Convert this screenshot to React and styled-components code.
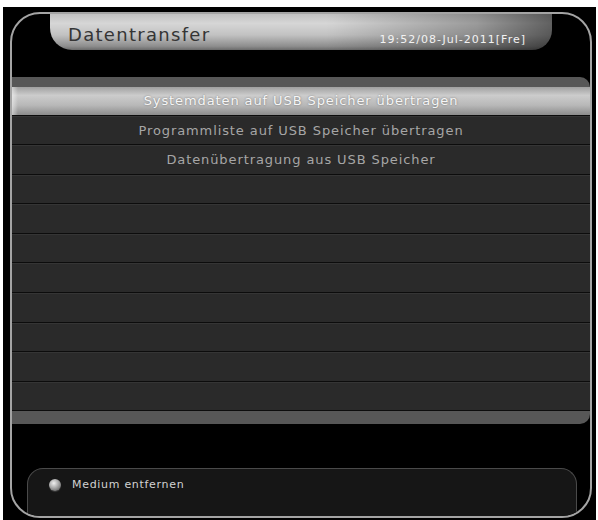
import React from "react";
import styled, { createGlobalStyle } from "styled-components";

const Global = createGlobalStyle`
  html, body { margin: 0; padding: 0; background: #ffffff; }
  body { font-family: "DejaVu Sans", "Liberation Sans", sans-serif; }
`;

const Page = styled.div`
  width: 598px;
  height: 520px;
  padding: 7px 0 0 3px;
  box-sizing: border-box;
  overflow: hidden;
`;

const Frame = styled.div`
  width: 593px;
  height: 513px;
  background: #000;
  padding: 5px 0 0 7px;
  box-sizing: border-box;
`;

const Screen = styled.div`
  width: 582px;
  height: 506px;
  box-sizing: border-box;
  border: 2px solid #a4a4a4;
  border-radius: 30px;
  display: flex;
  flex-direction: column;
  overflow: hidden;
`;

const HeaderTab = styled.div`
  margin: -2px 0 0 38px;
  width: 502px;
  height: 38px;
  box-sizing: border-box;
  border-radius: 0 0 20px 22px;
  background:
    linear-gradient(to right, rgba(0,0,0,0) 0%, rgba(0,0,0,0) 55%, rgba(0,0,0,0.28) 85%, rgba(0,0,0,0.55) 100%),
    linear-gradient(to bottom, #bdbdbd 0%, #d6d6d6 30%, #c2c2c2 60%, #8e8e8e 90%, #6a6a6a 100%);
  display: flex;
  align-items: center;
  justify-content: space-between;
  padding: 0 26px 0 18px;
`;

const Title = styled.div`
  font-size: 18px;
  color: #353535;
  letter-spacing: 1.3px;
  margin-top: 6px;
`;

const DateText = styled.div`
  font-size: 11px;
  color: #f2f2f2;
  letter-spacing: 1px;
  margin-top: 16px;
`;

const List = styled.div`
  margin-top: 27px;
  display: flex;
  flex-direction: column;
`;

const Band = styled.div`
  height: ${(p) => p.$h}px;
  background: #575757;
  border-radius: ${(p) => (p.$top ? "0 10px 0 0" : "0 0 10px 0")};
`;

const Row = styled.div`
  height: 28.5px;
  box-sizing: border-box;
  border-bottom: 1px solid #0c0c0c;
  border-top: ${(p) => (p.$sel ? "0" : "1px solid #353535")};
  display: flex;
  align-items: center;
  justify-content: center;
  font-size: 13px;
  letter-spacing: 0.9px;
  color: ${(p) => (p.$sel ? "#f6f6f6" : "#a6a6a6")};
  background: ${(p) =>
    p.$sel
      ? "linear-gradient(to right, rgba(255,255,255,0.5) 0px, rgba(255,255,255,0) 6px), linear-gradient(to bottom, #a0a0a0 0%, #cccccc 30%, #b8b8b8 65%, #8c8c8c 100%)"
      : "#2a2a2a"};
  text-shadow: ${(p) => (p.$sel ? "0 0 2px rgba(0,0,0,0.45)" : "none")};
  & + & { height: 29.6px; }
`;

const Footer = styled.div`
  margin: auto 0 0 15px;
  width: 550px;
  height: 48px;
  box-sizing: border-box;
  background: #161616;
  border: 1.5px solid #4a4a4a;
  border-bottom: 0;
  border-radius: 16px 16px 0 0;
  display: flex;
  align-items: flex-start;
  padding: 9px 0 0 21px;
  gap: 11px;
`;

const Ball = styled.div`
  width: 12px;
  height: 12px;
  border-radius: 50%;
  margin-top: 1px;
  background: radial-gradient(circle at 40% 35%, #f0f0f0 0%, #a8a8a8 45%, #4a4a4a 100%);
  box-shadow: 0 1px 1px rgba(255,255,255,0.15);
`;

const FooterText = styled.div`
  font-size: 11px;
  color: #d2d2d2;
  letter-spacing: 0.7px;
  line-height: 14px;
`;

const items = [
  "Systemdaten auf USB Speicher übertragen",
  "Programmliste auf USB Speicher übertragen",
  "Datenübertragung aus USB Speicher",
  "", "", "", "", "", "", "", "",
];

export default function App() {
  return (
    <>
      <Global />
      <Page>
        <Frame>
          <Screen>
            <HeaderTab>
              <Title>Datentransfer</Title>
              <DateText>19:52/08-Jul-2011[Fre]</DateText>
            </HeaderTab>
            <List>
              <Band $h={10} $top />
              {items.map((t, i) => (
                <Row key={i} $sel={i === 0}>{t}</Row>
              ))}
              <Band $h={13} />
            </List>
            <Footer>
              <Ball />
              <FooterText>Medium entfernen</FooterText>
            </Footer>
          </Screen>
        </Frame>
      </Page>
    </>
  );
}
